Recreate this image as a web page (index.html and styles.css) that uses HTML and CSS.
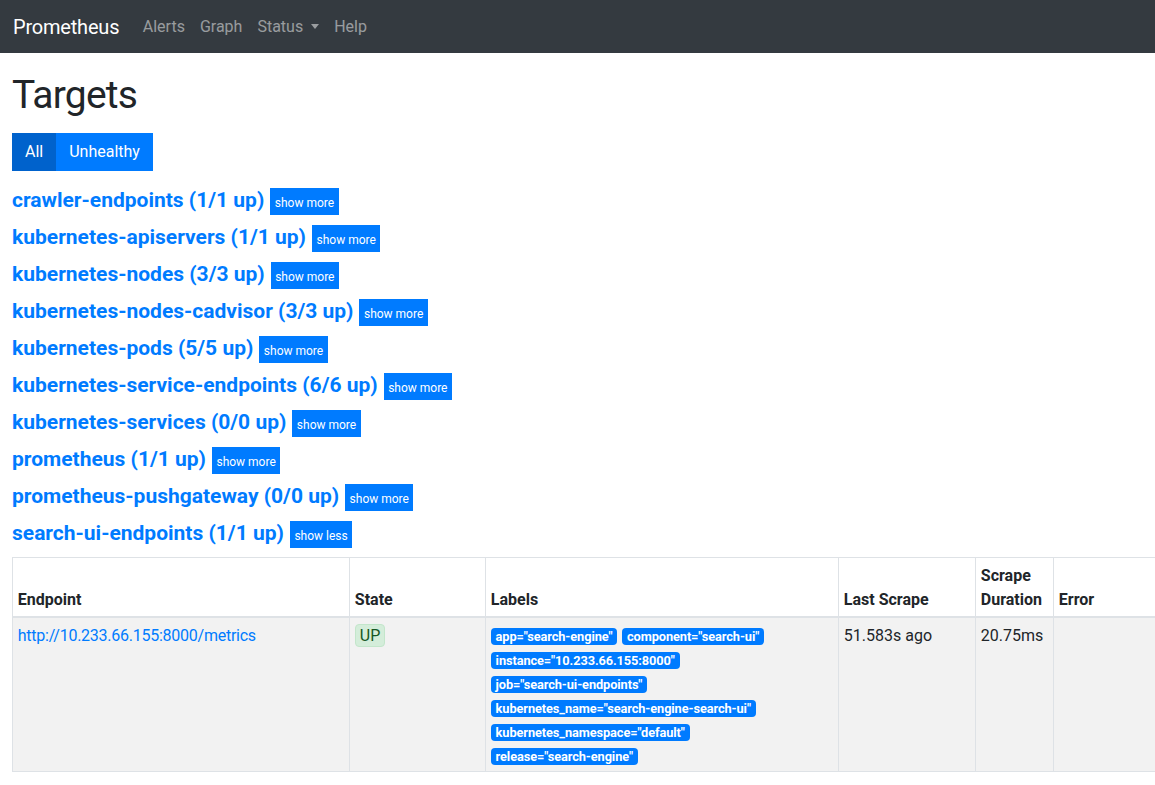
FILE: index.html
```html
<!DOCTYPE html>
<html lang="en">
<head>
<meta charset="utf-8">
<title>Prometheus Time Series Collection and Processing Server</title>
<link rel="stylesheet" href="styles.css">
</head>
<body>
<nav class="navbar">
  <a class="brand" href="#">Prometheus</a>
  <ul class="nav">
    <li><a class="nav-link" href="#">Alerts</a></li>
    <li><a class="nav-link" href="#">Graph</a></li>
    <li><a class="nav-link dropdown-toggle" href="#">Status</a></li>
    <li><a class="nav-link" href="#">Help</a></li>
  </ul>
</nav>
<main class="container">
  <h1 class="title">Targets</h1>
  <div class="btn-group">
    <button class="btn btn-active" type="button">All</button>
    <button class="btn" type="button">Unhealthy</button>
  </div>
  <div class="jobs">
    <div class="job"><a class="job-name" href="#">crawler-endpoints (1/1 up)</a><button class="btn-xs" type="button">show more</button></div>
    <div class="job"><a class="job-name" href="#">kubernetes-apiservers (1/1 up)</a><button class="btn-xs" type="button">show more</button></div>
    <div class="job"><a class="job-name" href="#">kubernetes-nodes (3/3 up)</a><button class="btn-xs" type="button">show more</button></div>
    <div class="job"><a class="job-name" href="#">kubernetes-nodes-cadvisor (3/3 up)</a><button class="btn-xs" type="button">show more</button></div>
    <div class="job"><a class="job-name" href="#">kubernetes-pods (5/5 up)</a><button class="btn-xs" type="button">show more</button></div>
    <div class="job"><a class="job-name" href="#">kubernetes-service-endpoints (6/6 up)</a><button class="btn-xs" type="button">show more</button></div>
    <div class="job"><a class="job-name" href="#">kubernetes-services (0/0 up)</a><button class="btn-xs" type="button">show more</button></div>
    <div class="job"><a class="job-name" href="#">prometheus (1/1 up)</a><button class="btn-xs" type="button">show more</button></div>
    <div class="job"><a class="job-name" href="#">prometheus-pushgateway (0/0 up)</a><button class="btn-xs" type="button">show more</button></div>
    <div class="job"><a class="job-name" href="#">search-ui-endpoints (1/1 up)</a><button class="btn-xs" type="button">show less</button></div>
  </div>
  <div class="table-wrap">
    <table class="targets">
      <colgroup>
        <col class="c-endpoint">
        <col class="c-state">
        <col class="c-labels">
        <col class="c-last">
        <col class="c-dur">
        <col class="c-err">
      </colgroup>
      <thead>
        <tr>
          <th>Endpoint</th>
          <th>State</th>
          <th>Labels</th>
          <th>Last Scrape</th>
          <th>Scrape Duration</th>
          <th>Error</th>
        </tr>
      </thead>
      <tbody>
        <tr>
          <td><a class="endpoint" href="#">http://10.233.66.155:8000/metrics</a></td>
          <td><span class="state-up">UP</span></td>
          <td class="labels">
            <div class="label-line"><span class="badge">app="search-engine"</span><span class="badge">component="search-ui"</span></div>
            <div class="label-line"><span class="badge">instance="10.233.66.155:8000"</span></div>
            <div class="label-line"><span class="badge">job="search-ui-endpoints"</span></div>
            <div class="label-line"><span class="badge">kubernetes_name="search-engine-search-ui"</span></div>
            <div class="label-line"><span class="badge">kubernetes_namespace="default"</span></div>
            <div class="label-line"><span class="badge">release="search-engine"</span></div>
          </td>
          <td>51.583s ago</td>
          <td>20.75ms</td>
          <td></td>
        </tr>
      </tbody>
    </table>
  </div>
</main>
</body>
</html>
```
FILE: styles.css
```css
html, body {
  margin: 0;
  padding: 0;
  background: #fff;
}
body {
  font-family: Roboto, "Liberation Sans", sans-serif;
  font-size: 16px;
  line-height: 24px;
  color: #212529;
  overflow: hidden;
}
a { text-decoration: none; }

.navbar {
  display: flex;
  align-items: center;
  height: 53px;
  padding: 1px 16px 0 13px;
  background: #343a40;
  box-sizing: border-box;
}
.brand {
  color: #fff;
  font-size: 20px;
  line-height: 30px;
  letter-spacing: -0.2px;
  margin-right: 16px;
}
.nav {
  display: flex;
  list-style: none;
  margin: 0;
  padding: 0;
}
.nav-link {
  display: block;
  padding: 0 7.5px;
  color: rgba(255, 255, 255, 0.5);
  font-size: 16px;
  line-height: 24px;
}
.dropdown-toggle::after {
  content: "";
  display: inline-block;
  margin-left: 8px;
  vertical-align: 3px;
  border-top: 5px solid rgba(255, 255, 255, 0.5);
  border-left: 4px solid transparent;
  border-right: 4px solid transparent;
}

.container {
  padding: 0 0 0 12px;
}
.title {
  font-size: 39px;
  font-weight: 400;
  line-height: 48px;
  letter-spacing: -0.8px;
  margin: 18px 0 14px;
  color: #212529;
}
.btn-group {
  display: flex;
  height: 38px;
}
.btn {
  font-family: inherit;
  font-size: 16px;
  line-height: 24px;
  padding: 7px 13px;
  border: 0;
  margin: 0;
  color: #fff;
  background: #007bff;
}
.btn-active {
  background: #0062cc;
}

.jobs {
  display: flex;
  flex-direction: column;
  gap: 10px;
  margin-top: 17px;
}
.job {
  display: flex;
  align-items: baseline;
  gap: 6px;
  height: 27px;
}
.job-name {
  color: #007bff;
  font-size: 21px;
  font-weight: 700;
  line-height: 24px;
}
.btn-xs {
  font-family: inherit;
  font-size: 12px;
  line-height: 18px;
  padding: 6px 4.5px 3px;
  border: 0;
  color: #fff;
  background: #007bff;
}

.table-wrap {
  margin-top: 9px;
  overflow: hidden;
}
.targets {
  border-collapse: collapse;
  table-layout: fixed;
  width: 1300px;
}
.c-endpoint { width: 337px; }
.c-state { width: 136px; }
.c-labels { width: 353px; }
.c-last { width: 137px; }
.c-dur { width: 78px; }
.c-err { width: 259px; }
.targets th,
.targets td {
  border: 1px solid #dee2e6;
  padding: 4.8px;
  text-align: left;
}
.targets th {
  vertical-align: bottom;
  font-weight: 700;
  border-bottom: 2px solid #dee2e6;
  padding-bottom: 3.8px;
  padding-top: 5.8px;
}
.targets td {
  vertical-align: top;
  background: #f2f2f2;
  padding-top: 6px;
  padding-bottom: 3.6px;
}
.endpoint {
  color: #007bff;
  letter-spacing: -0.25px;
}
.state-up {
  display: inline-block;
  padding: 0 4px;
  line-height: 21px;
  margin-top: -1px;
  border: 1px solid #c3e6cb;
  border-radius: 4px;
  background: #d4edda;
  color: #155724;
}
.label-line {
  height: 24px;
}
.badge {
  display: inline-block;
  margin-right: 5px;
  padding: 3px 4.8px 2.5px;
  font-size: 12.8px;
  font-weight: 700;
  line-height: 12px;
  letter-spacing: -0.1px;
  color: #fff;
  background: #007bff;
  border-radius: 4px;
  white-space: nowrap;
}
```
